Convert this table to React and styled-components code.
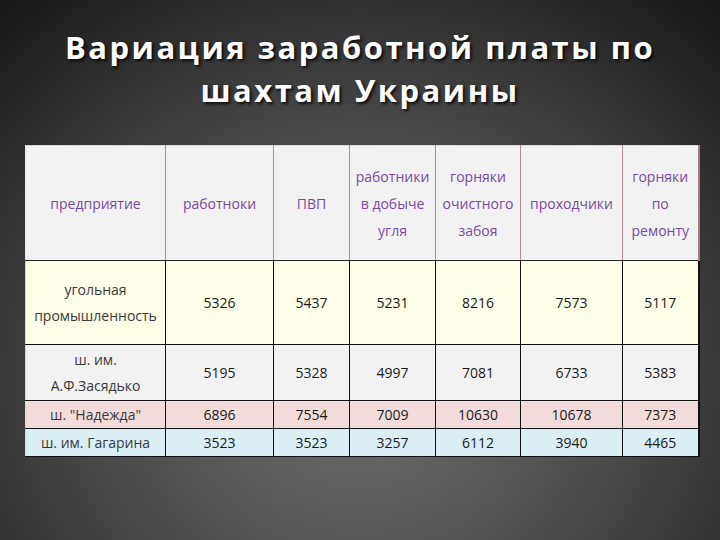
import styled, { createGlobalStyle } from "styled-components";

const GlobalStyle = createGlobalStyle`
  html, body {
    margin: 0;
    padding: 0;
    background: #111;
  }
  * {
    box-sizing: border-box;
  }
`;

const Slide = styled.div`
  width: 720px;
  height: 540px;
  overflow: hidden;
  padding: 26px 0 0 25px;
  background: radial-gradient(
    ellipse 560px 520px at 360px 380px,
    #6e6e6e 0%,
    #555 35%,
    #333 70%,
    #141414 100%
  );
  display: flex;
  flex-direction: column;
  align-items: flex-start;
`;

const Title = styled.h1`
  margin: 0 0 0 -25px;
  width: 720px;
  height: 119px;
  font-family: "Open Sans", "Liberation Sans", sans-serif;
  font-weight: 700;
  font-size: 31px;
  line-height: 43px;
  letter-spacing: 2.5px;
  color: #fff;
  text-align: center;
  text-shadow: 2px 2px 3px rgba(0, 0, 0, 0.8);
`;

const Table = styled.table`
  border-collapse: collapse;
  table-layout: fixed;
  width: 673px;
  font-family: "Open Sans", "Liberation Sans", sans-serif;
  font-size: 14px;
  border: 1px solid #d8d8d8;
`;

const HeadCell = styled.th`
  height: 115px;
  padding: 0 2px;
  background: #f2f2f2;
  color: #7a4aa0;
  font-weight: 400;
  font-size: 14px;
  line-height: 27px;
  text-align: center;
  vertical-align: middle;
  border-left: 1px solid #b98a8a;
  border-bottom: 1px solid #222;
  white-space: nowrap;
  &:first-child {
    border-left: 1px solid #e8e8e8;
  }
  &:last-child {
    border-right: 2px solid #a67c7c;
  }
`;

const rowColors = {
  yellow: "#fdfde9",
  grey: "#f2f2f2",
  pink: "#f2dcdb",
  blue: "#dbeef3",
};

const Row = styled.tr`
  background: ${(p) => rowColors[p.$tone]};
  height: ${(p) => p.$h}px;
`;

const Cell = styled.td`
  padding: 0;
  color: #1a1a1a;
  text-align: center;
  vertical-align: middle;
  line-height: 26px;
  border: 1px solid #111;
  white-space: nowrap;
  &:first-child {
    color: #3a3a3a;
    border-left: 1px solid #d8d8d8;
  }
  &:last-child {
    border-right: 2px solid #111;
  }
`;

const columns = [140, 108, 76, 86, 85, 102, 76];

const headers = [
  ["предприятие"],
  ["работноки"],
  ["ПВП"],
  ["работники", "в добыче", "угля"],
  ["горняки", "очистного", "забоя"],
  ["проходчики"],
  ["горняки", "по", "ремонту"],
];

const rows = [
  {
    tone: "yellow",
    h: 84,
    name: ["угольная", "промышленность"],
    values: [5326, 5437, 5231, 8216, 7573, 5117],
  },
  {
    tone: "grey",
    h: 56,
    name: ["ш. им.", "А.Ф.Засядько"],
    values: [5195, 5328, 4997, 7081, 6733, 5383],
  },
  {
    tone: "pink",
    h: 28,
    name: ['ш. "Надежда"'],
    values: [6896, 7554, 7009, 10630, 10678, 7373],
  },
  {
    tone: "blue",
    h: 28,
    name: ["ш. им. Гагарина"],
    values: [3523, 3523, 3257, 6112, 3940, 4465],
  },
];

function Lines({ lines }) {
  return lines.map((line, i) => (
    <span key={i}>
      {i > 0 && <br />}
      {line}
    </span>
  ));
}

function App() {
  return (
    <Slide>
      <GlobalStyle />
      <Title>
        Вариация заработной платы по
        <br />
        шахтам Украины
      </Title>
      <Table>
        <colgroup>
          {columns.map((w, i) => (
            <col key={i} style={{ width: w }} />
          ))}
        </colgroup>
        <thead>
          <tr>
            {headers.map((h, i) => (
              <HeadCell key={i}>
                <Lines lines={h} />
              </HeadCell>
            ))}
          </tr>
        </thead>
        <tbody>
          {rows.map((row) => (
            <Row key={row.name.join()} $tone={row.tone} $h={row.h}>
              <Cell>
                <Lines lines={row.name} />
              </Cell>
              {row.values.map((v, i) => (
                <Cell key={i}>{v}</Cell>
              ))}
            </Row>
          ))}
        </tbody>
      </Table>
    </Slide>
  );
}

export default App;
